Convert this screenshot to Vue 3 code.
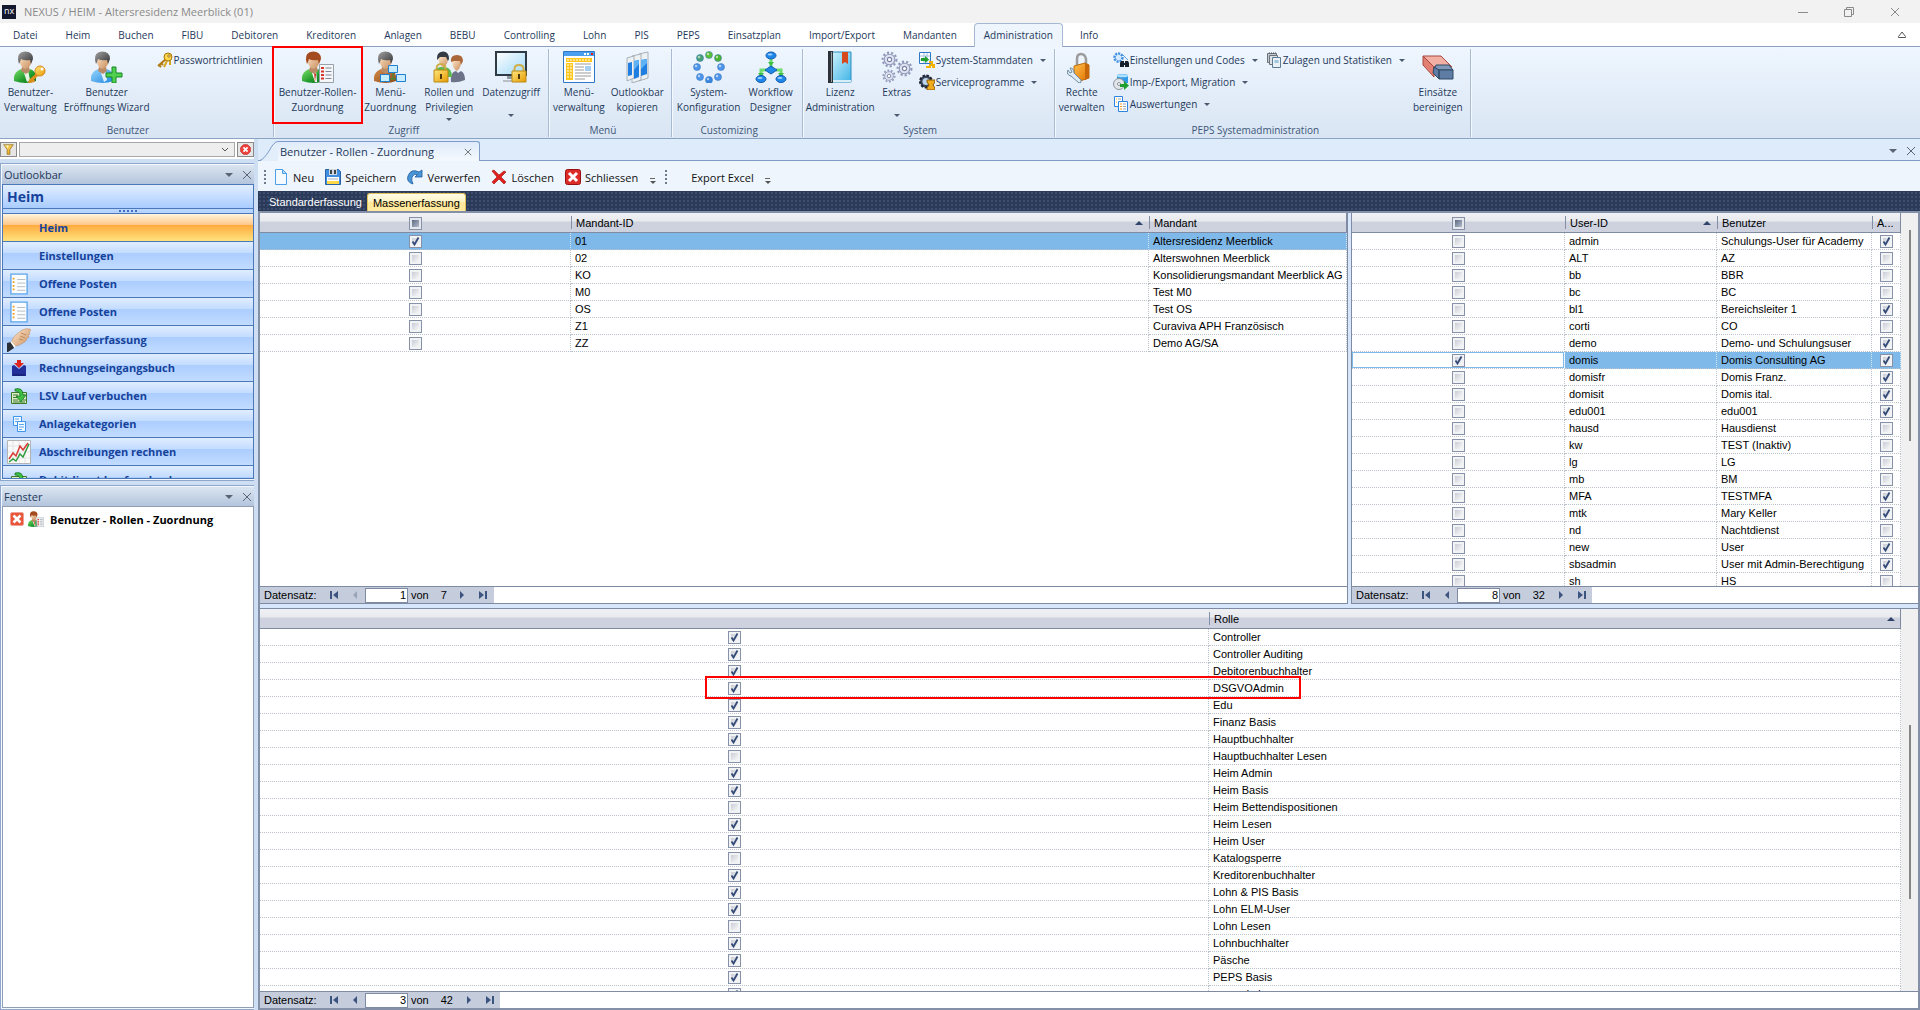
<script setup>
import { ref } from 'vue'

const menu = ['Datei', 'Heim', 'Buchen', 'FIBU', 'Debitoren', 'Kreditoren', 'Anlagen', 'BEBU', 'Controlling', 'Lohn', 'PIS', 'PEPS', 'Einsatzplan', 'Import/Export', 'Mandanten', 'Administration', 'Info']
const activeMenu = ref('Administration')

const groups = [
  { title: 'Benutzer', id: 'benutzer', items: [
    { icon: 'user-key', lines: ['Benutzer-', 'Verwaltung'] },
    { icon: 'user-add', lines: ['Benutzer', 'Eröffnungs Wizard'] },
    { small: [{ icon: 'keys', text: 'Passwortrichtlinien' }] },
  ] },
  { title: 'Zugriff', id: 'zugriff', items: [
    { icon: 'user-list', lines: ['Benutzer-Rollen-', 'Zuordnung'], marked: true },
    { icon: 'user-net', lines: ['Menü-', 'Zuordnung'] },
    { icon: 'users-lock', lines: ['Rollen und', 'Privilegien'], arrow: true },
    { icon: 'screen-lock', lines: ['Datenzugriff', ''], arrow: true },
  ] },
  { title: 'Menü', id: 'menu', items: [
    { icon: 'window', lines: ['Menü-', 'verwaltung'] },
    { icon: 'copy-bars', lines: ['Outlookbar', 'kopieren'] },
  ] },
  { title: 'Customizing', id: 'custom', items: [
    { icon: 'ring', lines: ['System-', 'Konfiguration'] },
    { icon: 'workflow', lines: ['Workflow', 'Designer'] },
  ] },
  { title: 'System', id: 'system', items: [
    { icon: 'book', lines: ['Lizenz', 'Administration'] },
    { icon: 'gears', lines: ['Extras', ''], arrow: true },
    { small: [{ icon: 'master', text: 'System-Stammdaten', arrow: true }, { icon: 'service', text: 'Serviceprogramme', arrow: true }] },
  ] },
  { title: 'PEPS Systemadministration', id: 'peps', items: [
    { icon: 'lock-tool', lines: ['Rechte', 'verwalten'] },
    { small: [{ icon: 'codes', text: 'Einstellungen und Codes', arrow: true }, { icon: 'disc', text: 'Imp-/Export, Migration', arrow: true }, { icon: 'reports', text: 'Auswertungen', arrow: true }] },
    { small: [{ icon: 'notes', text: 'Zulagen und Statistiken', arrow: true }] },
    { icon: 'eraser', lines: ['Einsätze', 'bereinigen'] },
  ] },
]

const outlook = [
  { text: 'Heim', active: true },
  { text: 'Einstellungen' },
  { text: 'Offene Posten', icon: 'list' },
  { text: 'Offene Posten', icon: 'list' },
  { text: 'Buchungserfassung', icon: 'hand' },
  { text: 'Rechnungseingangsbuch', icon: 'inbox' },
  { text: 'LSV Lauf verbuchen', icon: 'book-in' },
  { text: 'Anlagekategorien', icon: 'categories' },
  { text: 'Abschreibungen rechnen', icon: 'chart' },
  { text: 'Debitdirect Lauf verbuchen', icon: 'book-in' },
]

const tools = [
  { icon: 'new', text: 'Neu' },
  { icon: 'save', text: 'Speichern' },
  { icon: 'undo', text: 'Verwerfen' },
  { icon: 'delete', text: 'Löschen' },
  { icon: 'close', text: 'Schliessen' },
]

const u = (id, name, active, sel = false) => ({ sel, id, name, active })
const r = (role, sel = true) => ({ sel, role })

const panes = ref([
  {
    id: 'mandanten', pos: '1', total: '7', first: true, current: 0,
    cols: [
      { key: 'sel', check: true, head: true, w: 311 },
      { key: 'id', label: 'Mandant-ID', sort: true, w: 578 },
      { key: 'name', label: 'Mandant', w: 198 },
    ],
    rows: [
      { sel: true, id: '01', name: 'Altersresidenz Meerblick' },
      { sel: false, id: '02', name: 'Alterswohnen Meerblick' },
      { sel: false, id: 'KO', name: 'Konsolidierungsmandant Meerblick AG' },
      { sel: false, id: 'M0', name: 'Test M0' },
      { sel: false, id: 'OS', name: 'Test OS' },
      { sel: false, id: 'Z1', name: 'Curaviva APH Französisch' },
      { sel: false, id: 'ZZ', name: 'Demo AG/SA' },
    ],
  },
  {
    id: 'user', pos: '8', total: '32', current: 7, focus: true, scroll: [17, 211, 145],
    cols: [
      { key: 'sel', check: true, head: true, w: 213 },
      { key: 'id', label: 'User-ID', sort: true, w: 152 },
      { key: 'name', label: 'Benutzer', w: 155 },
      { key: 'active', label: 'A...', check: true, w: 29 },
    ],
    rows: [
      u('admin', 'Schulungs-User für Academy', true), u('ALT', 'AZ', false), u('bb', 'BBR', false), u('bc', 'BC', false),
      u('bl1', 'Bereichsleiter 1', true), u('corti', 'CO', false), u('demo', 'Demo- und Schulungsuser', true),
      u('domis', 'Domis Consulting AG', true, true), u('domisfr', 'Domis Franz.', true), u('domisit', 'Domis ital.', true),
      u('edu001', 'edu001', true), u('hausd', 'Hausdienst', false), u('kw', 'TEST (Inaktiv)', false), u('lg', 'LG', false),
      u('mb', 'BM', false), u('MFA', 'TESTMFA', true), u('mtk', 'Mary Keller', true), u('nd', 'Nachtdienst', false),
      u('new', 'User', true), u('sbsadmin', 'User mit Admin-Berechtigung', true), u('sh', 'HS', false),
    ],
  },
  {
    id: 'rollen', pos: '3', total: '42', marked: 3, scroll: [116, 174, 92],
    cols: [
      { key: 'sel', check: true, w: 949 },
      { key: 'role', label: 'Rolle', sort: true, w: 692 },
    ],
    rows: [
      r('Controller'), r('Controller Auditing'), r('Debitorenbuchhalter'), r('DSGVOAdmin'), r('Edu'), r('Finanz Basis'),
      r('Hauptbuchhalter'), r('Hauptbuchhalter Lesen', false), r('Heim Admin'), r('Heim Basis'), r('Heim Bettendispositionen', false),
      r('Heim Lesen'), r('Heim User'), r('Katalogsperre', false), r('Kreditorenbuchhalter'), r('Lohn & PIS Basis'),
      r('Lohn ELM-User'), r('Lohn Lesen', false), r('Lohnbuchhalter'), r('Päsche'), r('PEPS Basis'), r('pepsadmin'),
    ],
  },
])

const colWidth = (pane, col) => (col.w / pane.cols.reduce((s, c) => s + c.w, 0)) * 100 + '%'
const ring = [[16, 4, '#5cc03a'], [25, 7, '#4cb52f'], [28, 16, '#4f96ea'], [25, 26, '#4f96ea'], [16, 29, '#3b86e0'], [7, 26, '#4f96ea'], [4, 16, '#4f96ea'], [7, 7, '#4aa276']]
</script>

<template>
  <div class="app">
    <svg class="defs" aria-hidden="true">
      <defs>
        <linearGradient id="g-green" x1="0" y1="0" x2="1" y2="1"><stop offset="0" stop-color="#7be06a" /><stop offset=".6" stop-color="#1f9a2c" /><stop offset="1" stop-color="#0c6b1b" /></linearGradient>
        <linearGradient id="g-blue" x1="0" y1="0" x2="1" y2="1"><stop offset="0" stop-color="#9bd8ff" /><stop offset="1" stop-color="#1f86dd" /></linearGradient>
        <linearGradient id="g-brown" x1="0" y1="0" x2="1" y2="1"><stop offset="0" stop-color="#d98c4a" /><stop offset="1" stop-color="#8a4a1a" /></linearGradient>
        <linearGradient id="g-skin" x1="0" y1="0" x2="1" y2="1"><stop offset="0" stop-color="#ffe9cf" /><stop offset="1" stop-color="#c98d5c" /></linearGradient>
        <linearGradient id="g-hair" x1="0" y1="0" x2="1" y2="1"><stop offset="0" stop-color="#a2a2a2" /><stop offset="1" stop-color="#333" /></linearGradient>
        <linearGradient id="g-gold" x1="0" y1="0" x2="1" y2="1"><stop offset="0" stop-color="#ffe680" /><stop offset="1" stop-color="#e69a00" /></linearGradient>
        <linearGradient id="g-screen" x1="0" y1="0" x2="1" y2="1"><stop offset="0" stop-color="#fff" /><stop offset="1" stop-color="#9fd8f8" /></linearGradient>
        <linearGradient id="g-orange" x1="0" y1="0" x2="1" y2="1"><stop offset="0" stop-color="#ffc04a" /><stop offset="1" stop-color="#e07000" /></linearGradient>
        <linearGradient id="g-cyan" x1="0" y1="0" x2="1" y2="1"><stop offset="0" stop-color="#d8f6ff" /><stop offset="1" stop-color="#3fb4e6" /></linearGradient>
      </defs>
      <symbol id="i-head" viewBox="0 0 32 32">
        <path d="M8 16h7l1 4-4 3-5-3z" fill="#b98a66" />
        <path d="M5 6q0-5 6-5 7 0 7 6 0 6-3 9-3 3-6 1-4-4-4-11z" fill="url(#g-skin)" />
      </symbol>
      <symbol id="i-user-key" viewBox="0 0 32 32">
        <path d="M0 30q-1-9 7-12l5 4 4-4q6 2 6 8v4q-10 4-22 0z" fill="url(#g-green)" /><path d="M9 19l3 3 2-3 2 10-3 2z" fill="#e6f4e2" />
        <use href="#i-head" /><path d="M4 9q-1-8 7-8.500 8 0 8 7.500l-2 5-1-4q-6 1-9-1l-1 3-1 2z" fill="url(#g-hair)" />
        <path d="M24 23l-8 7M18 28l2 3M15 30l2 2" stroke="#e0901a" stroke-width="3" /><circle cx="26" cy="20" r="5" fill="url(#g-gold)" stroke="#d9861a" /><circle cx="28" cy="18" r="1.500" fill="#fff" />
      </symbol>
      <symbol id="i-user-add" viewBox="0 0 32 32">
        <path d="M0 30q-1-9 7-12l5 4 4-4q6 2 6 8v4q-10 4-22 0z" fill="url(#g-blue)" /><path d="M9 19l3 3 2-3 2 10-3 2z" fill="#e2effa" />
        <use href="#i-head" /><path d="M4 9q-1-8 7-8.500 8 0 8 7.500l-2 5-1-4q-6 1-9-1l-1 3-1 2z" fill="url(#g-hair)" />
        <path d="M21 16h4v6h6v4h-6v6h-4v-6h-6v-4h6z" fill="#52cf4e" stroke="#128a24" />
      </symbol>
      <symbol id="i-user-list" viewBox="0 0 32 32">
        <path d="M0 30q-1-9 7-12l5 4 4-4q6 2 6 8v4q-10 4-22 0z" fill="url(#g-green)" /><path d="M9 19l3 3 2-3 1 12h-2z" fill="#fff" /><path d="M12 21l2 2-1 8z" fill="#c8201c" />
        <use href="#i-head" /><path d="M4 9q-1-8 7-8.500 8 0 8 7.500l-2 5-1-4q-6 1-9-1l-1 3-1 2z" fill="#a34a1e" />
        <path d="M17.500 13.500h14v18h-14z" fill="#f4f6f8" stroke="#98a2ac" /><path d="M19 17h3M19 20.500h3M19 24h3M19 27.500h3" stroke="#d8342c" stroke-width="2" /><path d="M23.500 17h6M23.500 20.500h6M23.500 24h6M23.500 27.500h6" stroke="#7e8a98" />
      </symbol>
      <symbol id="i-user-net" viewBox="0 0 32 32">
        <path d="M0 30q-1-9 7-12l5 4 4-4q6 2 6 8v4q-10 4-22 0z" fill="url(#g-brown)" />
        <use href="#i-head" /><path d="M4 9q-1-8 7-8.500 8 0 8 7.500l-2 5-1-4q-6 1-9-1l-1 3-1 2z" fill="url(#g-hair)" />
        <path d="M19 20v8M8 28h20" stroke="#2f9a3a" /><g fill="#c7ecff" stroke="#1f7fd0"><path d="M14.500 14.500h9v7h-9zM6.500 23.500h9v7h-9zM22.500 23.500h9v7h-9z" /></g>
      </symbol>
      <symbol id="i-users-lock" viewBox="0 0 32 32">
        <path d="M18 31q-1-10 5-11l2 2 3-2q4 2 4 9-7 3-14 2z" fill="#6d7388" /><path d="M19 8h9q1 8-4 12-5-2-5-12z" fill="url(#g-skin)" /><path d="M18 11q-1-7 6-7 6 0 6 6l-2 4-1-4h-6z" fill="#a9673a" />
        <path d="M1 26q0-9 6-10h5q7 1 7 10z" fill="#5bb94d" /><path d="M5 4h10q1 9-5 13-5-4-5-13z" fill="url(#g-skin)" /><path d="M4 9q-1-8 6-8.500 6 0 6 7.500l-1 2-2-4H7z" fill="#333a44" />
        <path d="M3.500 19v-1q0-5 4.500-5t4.500 5v1" fill="none" stroke="#cfae48" stroke-width="2" /><path d="M1 19h14v12H1z" fill="url(#g-gold)" stroke="#b98a14" /><path d="M7 23h2v5H7z" fill="#4d3a08" />
      </symbol>
      <symbol id="i-screen-lock" viewBox="0 0 32 32">
        <path d="M1 1h30v23H1z" fill="url(#g-screen)" stroke="#2e3a44" stroke-width="2" /><path d="M12 25h8v3h-8z" fill="#8e979f" /><path d="M8 29h14v2H8z" fill="#b7bec4" />
        <path d="M19.500 20v-2q0-4 4.500-4t4.500 4v2" fill="none" stroke="#cfae48" stroke-width="2" /><path d="M17 20h14v11H17z" fill="url(#g-gold)" stroke="#b98a14" /><path d="M23 23h2v5h-2z" fill="#4d3a08" />
      </symbol>
      <symbol id="i-window" viewBox="0 0 32 32">
        <path d="M.5.500h31v31H.500z" fill="#fff" stroke="#2f78c8" /><path d="M1 1h30v4H1z" fill="#4aa0ee" /><path d="M21 2h2v2h-2zM24 2h2v2h-2z" fill="#fff" /><path d="M28 2h2v2h-2z" fill="#e81c1c" />
        <path d="M3 7h26v4H3z" fill="#ffc61c" /><path d="M3 12h7v17H3z" fill="#ffc61c" /><path d="M4 9h24M4 14h5M4 17h5M4 20h5M4 23h5M4 26h5" stroke="#fff" stroke-dasharray="2 1" />
        <path d="M12 13h16M12 16h9M12 19h9M12 22h16M12 25h16M12 28h10" stroke="#9a9a9a" /><path d="M22 15h6v5h-6z" fill="#a8cdf2" />
      </symbol>
      <symbol id="i-copy-bars" viewBox="0 0 32 32">
        <g stroke="#a8b0b8" fill="#eef1f4"><path d="M18 3l9-2v26l-9 3z" /><path d="M11 5l9-2v26l-9 3z" /><path d="M6 7l7-2v22l-7 3z" /></g>
        <path d="M20 9l6-1v15l-6 2zM13 10l5-1v17l-5 2zM7 12l4-1v13l-4 1z" fill="#1f7fe0" /><path d="M20 9l6-1v4l-6 6zM13 10l5-1v4l-5 6z" fill="#5fb2f6" />
      </symbol>
      <symbol id="i-ring" viewBox="0 0 32 32">
        <g v-for="(p, i) in ring" :key="i"><circle :cx="p[0]" :cy="p[1]" r="3.500" :fill="p[2]" stroke="#2f6fb8" stroke-width=".500" /><circle :cx="p[0] - 1" :cy="p[1] - 1" r="1.200" fill="#fff" opacity=".6" /></g>
      </symbol>
      <symbol id="i-workflow" viewBox="0 0 32 32">
        <path d="M16 8v8M11 19H6v6M21 19h5v6" fill="none" stroke="#6cdc6c" stroke-width="3" /><path d="M13 11l3 4 3-4zM3 22l3 4 3-4zM23 22l3 4 3-4z" fill="#3fbf4a" />
        <g fill="#1f86ea" stroke="#0f5cb0"><ellipse cx="16" cy="4.500" rx="5" ry="3.500" /><path d="M16 15l6 4-6 4-6-4z" /><ellipse cx="6" cy="28" rx="5" ry="3.500" /><ellipse cx="26" cy="28" rx="5" ry="3.500" /></g><g fill="#9fd2ff"><ellipse cx="15" cy="3.500" rx="2.500" ry="1" /><ellipse cx="5" cy="27" rx="2.500" ry="1" /><ellipse cx="25" cy="27" rx="2.500" ry="1" /></g>
      </symbol>
      <symbol id="i-book" viewBox="0 0 32 32">
        <path d="M5 1h22v30H5z" fill="url(#g-cyan)" stroke="#2b8fc0" /><path d="M4 0h5v32H4z" fill="#2c3238" /><path d="M7 1h1v30H7z" fill="#9aa4ac" /><path d="M9 29h18v2H9z" fill="#d6eef8" /><path d="M18 1h6v12l-3-2-3 2z" fill="#d5491c" />
      </symbol>
      <symbol id="i-gear" viewBox="0 0 16 16">
        <circle cx="8" cy="8" r="6.500" fill="none" stroke="#8f98b8" stroke-width="2" stroke-dasharray="2 2" /><circle cx="8" cy="8" r="5" fill="#dfe3f0" stroke="#8f98b8" /><circle cx="8" cy="8" r="2" fill="#fff" stroke="#7a84a8" />
      </symbol>
      <symbol id="i-gears" viewBox="0 0 32 32">
        <use href="#i-gear" x="0" y="0" width="17" height="17" /><use href="#i-gear" x="15" y="9" width="17" height="17" /><use href="#i-gear" x="1" y="18" width="14" height="14" />
      </symbol>
      <symbol id="i-lock-tool" viewBox="0 0 32 32">
        <path d="M11 14V8q0-5 4-5t5 5v5" fill="none" stroke="#9c9c9c" stroke-width="2.500" /><path d="M8 15l11-3 4 2v13l-9 3-6-4z" fill="url(#g-orange)" stroke="#b86a10" /><path d="M19 12l4 2v13l-4 2z" fill="#c8660a" />
        <path d="M2 19q-2 5 3 6l8 7q3 0 2-3l-7-7q0-5-4-5l2 4-2 1z" fill="#dfeaf2" stroke="#6f8ca4" />
      </symbol>
      <symbol id="i-eraser" viewBox="0 0 32 32">
        <path d="M1 5h18l11 11H12z" fill="#f2b0a4" stroke="#a8483c" /><path d="M1 5l11 11v10L1 14z" fill="#e07f72" stroke="#a8483c" /><path d="M14 14h13l4 5H17l-5 0z" fill="#8098b8" stroke="#2f4864" /><path d="M12 16l5 3v9l-6-6zM17 19h14v9H17z" fill="#5f7ca4" stroke="#2f4864" />
      </symbol>
      <symbol id="i-keys" viewBox="0 0 16 16">
        <path d="M9 7L1 14M2 13l2 2M4 11l2 2" stroke="#b07a10" stroke-width="2" fill="none" /><circle cx="11" cy="5" r="4" fill="#ffd84a" stroke="#a87408" /><circle cx="12" cy="4" r="1.200" fill="#fff" stroke="#a87408" /><path d="M10 9l-3 6M13 9v4" stroke="#d8a41c" stroke-width="2" />
      </symbol>
      <symbol id="i-master" viewBox="0 0 16 16">
        <path d="M.5.500h11v11H.500z" fill="#fff" stroke="#2f78c8" /><path d="M1 4h10M1 8h10M5 1v10M8 1v10" stroke="#9fbfe0" /><path d="M2 6h4V4l4 3.500L6 11V9H2z" fill="#1fa02c" /><path d="M10 10h3v3h3v2h-3M7 15h4v-3" fill="none" stroke="#f2b200" stroke-width="2" />
      </symbol>
      <symbol id="i-service" viewBox="0 0 16 16">
        <circle cx="7" cy="7.500" r="6" fill="#3c4658" stroke="#1c2434" stroke-width="2" stroke-dasharray="2.500 1.500" /><circle cx="7" cy="7.500" r="3.500" fill="#bcd4f0" /><path d="M8 6h8v2l-2 3 2 3v2H8v-2l2-3-2-3z" fill="#f0ac1c" stroke="#8a5a08" />
      </symbol>
      <symbol id="i-codes" viewBox="0 0 16 16">
        <circle cx="5.500" cy="5.500" r="4" fill="#d6eaff" stroke="#3f8ee0" stroke-width="2.500" stroke-dasharray="2 1" /><path d="M9 2l6 6" stroke="#5aa0e6" /><path d="M8 9h3v6H7v-4zM12 9h3l1 2v4h-4z" fill="#15202c" /><path d="M11 11h1v2h-1z" fill="#15202c" />
      </symbol>
      <symbol id="i-disc" viewBox="0 0 16 16">
        <path d="M4 1q6-2 11 0v8H4z" fill="#2f9ae8" /><ellipse cx="9.500" cy="1.800" rx="5.500" ry="1.500" fill="#aee0ff" /><circle cx="6" cy="10" r="5.500" fill="#e2e6ea" stroke="#8c949c" /><circle cx="6" cy="10" r="1.500" fill="#fff" stroke="#8c949c" /><path d="M7 10h4V7l5 4.500-5 4.500v-3H7z" fill="#1fa02c" />
      </symbol>
      <symbol id="i-reports" viewBox="0 0 16 16">
        <path d="M1.500.500h8v10h-8z" fill="#fff" stroke="#2f84e0" /><path d="M5.500 5.500h9v10h-9z" fill="#fff" stroke="#2f84e0" /><path d="M7 8h2M7 10.500h2M7 13h2M3 3h1M3 6h1" stroke="#f29a1c" /><path d="M10 8h3M10 10.500h3M10 13h3M5 3h3" stroke="#98a4b0" />
      </symbol>
      <symbol id="i-notes" viewBox="0 0 16 16">
        <path d="M1.500 1.500h9v9h-9z" fill="#c2c8ce" stroke="#6a727a" /><path d="M3.500 3.500h8v9h-8z" fill="#dde2e6" stroke="#6a727a" /><path d="M6.500 5.500h8v10h-8z" fill="#eaf2f8" stroke="#5f7c94" /><path d="M8.500 8h4v3h-4z" fill="#9fc6de" /><path d="M3 1h7" stroke="#555" stroke-dasharray="1 1" />
      </symbol>
      <symbol id="i-list" viewBox="0 0 20 24">
        <path d="M1 1h18v22H1z" fill="#fbfdff" stroke="#5fa6ea" stroke-width="1.500" /><path d="M3 6h2M3 10h2M3 14h2M3 18h2" stroke="#f2a01c" stroke-width="2" /><path d="M8 7h9M8 11h9M8 15h9M8 19h9" stroke="#b0b8c0" />
      </symbol>
      <symbol id="i-hand" viewBox="0 0 24 24">
        <path d="M4 15q2-7 6-9l5-4q4-2 8-1 2 2-1 3l1 2-2 1 1 2-2 1q0 3-4 5-4 3-8 3l-2 2z" fill="url(#g-skin)" stroke="#c08858" stroke-width=".500" /><path d="M14 5l5 2M13 8l5 2M12 11l4 1" stroke="#b57a4c" stroke-width=".800" /><path d="M0 15l4-1 3 6-6 4H0z" fill="#2b3038" /><path d="M4 14l4 5" stroke="#fff" stroke-width="1.500" />
      </symbol>
      <symbol id="i-inbox" viewBox="0 0 16 16">
        <path d="M1 6l2-1 5 4 5-4 2 1v10H1z" fill="#24309a" /><path d="M2 15h12" stroke="#0f1660" /><path d="M6 0h4v3h3L8 8 3 3h3z" fill="#e0241c" />
      </symbol>
      <symbol id="i-book-in" viewBox="0 0 16 16">
        <path d="M.5 4.500h15v11H.500z" fill="#dcebc8" stroke="#3c7a2c" /><path d="M2 7h5M2 9.500h5M2 12h5M2 14h12M11 7h3M12 12h3" stroke="#3c7a2c" /><path d="M4 1q8-2 8 6h3l-5 7-5-6h4q0-5-5-5z" fill="#3fc044" stroke="#0f6a18" stroke-width=".700" />
      </symbol>
      <symbol id="i-categories" viewBox="0 0 16 16">
        <g fill="#f2f9ff" stroke="#3f94ec"><path d="M2.500.500h8v9h-8z" /><path d="M6.500 5.500h8v10h-8z" /></g><path d="M4 3h4M4 5.500h2M8 8.500h5M8 11h5M8 13.500h3" stroke="#5aa6f0" />
      </symbol>
      <symbol id="i-chart" viewBox="0 0 24 24">
        <path d="M.5.500h23v23H.500z" fill="#fafafa" stroke="#b4b4b4" /><path d="M6 1v22M12 1v22M18 1v22M1 6h22M1 12h22M1 18h22" stroke="#e4e4e4" /><path d="M2 19l4-6 3 3 4-10 3 4 5-7" fill="none" stroke="#d83a34" stroke-width="1.500" /><path d="M2 22l4-3 3 2 4-7 3 3 6-13" fill="none" stroke="#2f9a3c" stroke-width="1.500" />
      </symbol>
      <symbol id="i-new" viewBox="0 0 16 16"><path d="M2.500.500h7l4 4v11h-11z" fill="#f4faff" stroke="#4f9fe6" /><path d="M9.500.500v4h4z" fill="#b8dcfa" stroke="#4f9fe6" /></symbol>
      <symbol id="i-save" viewBox="0 0 16 16"><path d="M.5.500h13l2 2v13H.500z" fill="#3f8fe0" stroke="#2a62a8" /><path d="M4 0h8v6H4z" fill="#d2d8de" /><path d="M5 1h2v4H5zM9 1h2v4H9z" fill="#3c444c" /><path d="M2 8h12v7H2z" fill="#fff" /><path d="M2 12h12v3H2z" fill="#ffd84a" /><path d="M3 10h10" stroke="#a8b0b8" /></symbol>
      <symbol id="i-undo" viewBox="0 0 16 16"><path d="M15 1v7H8l2.500-2.500Q7 4 5 8q-1 3 1 7Q-1 13 1 7 4-1 12 3z" fill="#4a94d8" stroke="#1c5c9c" stroke-width=".800" /></symbol>
      <symbol id="i-delete" viewBox="0 0 16 16"><path d="M1 2l2-1 5 5 5-4 2 1-5 5 5 5-2 2-5-5-5 5-2-2 5-5z" fill="#e0201c" stroke="#a00c0c" stroke-width=".600" /></symbol>
      <symbol id="i-close" viewBox="0 0 16 16"><rect x=".5" y=".5" width="15" height="15" rx="2" fill="#dc2c28" stroke="#981010" /><path d="M4 4l8 8M12 4l-8 8" stroke="#fff" stroke-width="3" /></symbol>
      <symbol id="i-close-light" viewBox="0 0 16 16"><rect x=".5" y=".5" width="15" height="15" rx="2" fill="#e8553c" stroke="#f0a090" /><path d="M4 4l8 8M12 4l-8 8" stroke="#fff" stroke-width="3" /></symbol>
      <symbol id="i-funnel" viewBox="0 0 16 16"><path d="M1 1h14L10 8v7H6V8z" fill="url(#g-gold)" stroke="#8a6a20" /><path d="M5 2h3l-1 5z" fill="#fff6c8" /></symbol>
      <symbol id="i-clear" viewBox="0 0 16 16"><path d="M5 1h6l4 4v6l-4 4H5l-4-4V5z" fill="#f0403c" stroke="#c01c1c" /><path d="M5 5l6 6M11 5l-6 6" stroke="#fff" stroke-width="2.500" /></symbol>
      <symbol id="i-x" viewBox="0 0 10 10"><path d="M1 1l8 8M9 1l-8 8" stroke="currentColor" fill="none" /></symbol>
      <symbol id="i-down" viewBox="0 0 8 4"><path d="M0 0h8L4 4z" fill="currentColor" /></symbol>
    </svg>

    <header class="titlebar">
      <span class="logo">nx</span>
      <h1>NEXUS / HEIM - Altersresidenz Meerblick (01)</h1>
      <button class="win" aria-label="Minimieren"><svg viewBox="0 0 10 10"><path d="M0 5.500h10" stroke="currentColor" /></svg></button>
      <button class="win" aria-label="Verkleinern"><svg viewBox="0 0 10 10"><path d="M.5 2.500h7v7h-7zM2.500 2.500v-2h7v7h-2" fill="none" stroke="currentColor" /></svg></button>
      <button class="win" aria-label="Schliessen"><svg><use href="#i-x" /></svg></button>
    </header>

    <nav class="menubar">
      <button v-for="m in menu" :key="m" class="menu-tab" :class="{ active: m === activeMenu }" @click="activeMenu = m">{{ m }}</button>
      <button class="collapse" aria-label="Menüband minimieren"><svg viewBox="0 0 8 8"><path d="M.5 5.500L4 1l3.500 4.500v1h-7z" fill="none" stroke="currentColor" /></svg></button>
    </nav>

    <section class="ribbon">
      <div v-for="g in groups" :key="g.id" class="group" :class="g.id">
        <div class="items">
          <template v-for="(it, i) in g.items" :key="i">
            <div v-if="it.small" class="stack">
              <button v-for="s in it.small" :key="s.text" class="small">
                <svg class="ic16"><use :href="'#i-' + s.icon" /></svg><span>{{ s.text }}</span>
                <svg v-if="s.arrow" class="caret"><use href="#i-down" /></svg>
              </button>
            </div>
            <button v-else class="big">
              <svg class="ic32"><use :href="'#i-' + it.icon" /></svg>
              <span>{{ it.lines[0] }}</span>
              <span v-if="it.lines[1]">{{ it.lines[1] }}</span>
              <svg v-if="it.arrow" class="caret" :class="{ low: !it.lines[1] }"><use href="#i-down" /></svg>
              <i v-if="it.marked" class="mark"></i>
            </button>
          </template>
        </div>
        <div class="caption">{{ g.title }}</div>
      </div>
    </section>

    <div class="work">
      <aside class="side">
        <div class="filter">
          <button class="fbtn" aria-label="Filter"><svg><use href="#i-funnel" /></svg></button>
          <span class="combo"><select aria-label="Suche"><option></option></select><svg viewBox="0 0 8 5"><path d="M1 1l3 3 3-3" fill="none" stroke="currentColor" /></svg></span>
          <button class="fbtn" aria-label="Filter löschen"><svg><use href="#i-clear" /></svg></button>
        </div>
        <div class="docks">
          <section class="dock">
            <h2><span>Outlookbar</span><button aria-label="Menü"><svg class="tri"><use href="#i-down" /></svg></button><button aria-label="Schliessen"><svg class="cross"><use href="#i-x" /></svg></button></h2>
            <div class="bar">
              <h3>Heim</h3>
              <div class="splitter"></div>
              <ul>
                <li v-for="(o, i) in outlook" :key="i"><a href="#" :class="{ active: o.active }"><svg v-if="o.icon" :class="o.icon"><use :href="'#i-' + o.icon" /></svg><span>{{ o.text }}</span></a></li>
              </ul>
            </div>
          </section>
          <section class="dock">
            <h2><span>Fenster</span><button aria-label="Menü"><svg class="tri"><use href="#i-down" /></svg></button><button aria-label="Schliessen"><svg class="cross"><use href="#i-x" /></svg></button></h2>
            <div class="windows">
              <a href="#"><svg class="x14"><use href="#i-close-light" /></svg><svg class="ic16"><use href="#i-user-list" /></svg><span>Benutzer - Rollen - Zuordnung</span></a>
            </div>
          </section>
        </div>
      </aside>

      <main class="main">
        <div class="tabs">
          <div class="tab">
            <svg class="slant" viewBox="0 0 18 20"><path d="M0 20Q6 18 9 12 14 1 18 1V20z" fill="#e3eefb" /><path d="M0 19.500Q4 18 9 10 14 .500 18 .500" fill="none" stroke="#7f9dc6" /></svg>
            <div class="tab-in"><span>Benutzer - Rollen - Zuordnung</span><button aria-label="Tab schliessen"><svg><use href="#i-x" /></svg></button></div>
          </div>
          <div class="tab-tools"><button aria-label="Fensterliste"><svg class="tri"><use href="#i-down" /></svg></button><button aria-label="Schliessen"><svg class="cross"><use href="#i-x" /></svg></button></div>
        </div>

        <div class="toolbar">
          <i class="grip"></i>
          <button v-for="t in tools" :key="t.text"><svg class="ic16"><use :href="'#i-' + t.icon" /></svg>{{ t.text }}</button>
          <i class="more"></i>
          <i class="grip"></i>
          <button class="export">Export Excel</button>
          <i class="more"></i>
        </div>

        <div class="views">
          <button>Standarderfassung</button>
          <button class="active">Massenerfassung</button>
        </div>

        <div class="panes">
          <section v-for="p in panes" :key="p.id" class="pane" :class="p.id">
            <div class="body">
              <div class="grid">
                <table>
                  <colgroup><col v-for="c in p.cols" :key="c.key" :style="{ width: colWidth(p, c) }" /></colgroup>
                  <thead>
                    <tr>
                      <th v-for="c in p.cols" :key="c.key" scope="col">
                        <input v-if="c.head" type="checkbox" class="partial" aria-label="Alle auswählen" />
                        <div v-else class="th"><span>{{ c.label }}</span><svg v-if="c.sort" viewBox="0 0 8 4"><path d="M0 4h8L4 0z" fill="#2f4468" /></svg></div>
                      </th>
                    </tr>
                  </thead>
                  <tbody>
                    <tr v-for="(row, i) in p.rows" :key="i" :class="{ current: i === p.current, focus: p.focus }">
                      <td v-for="(c, j) in p.cols" :key="c.key">
                        <input v-if="c.check" v-model="row[c.key]" type="checkbox" :aria-label="row.name || row.role" />
                        <template v-else>{{ row[c.key] }}</template>
                        <i v-if="i === p.marked && j === 0" class="row-mark"></i>
                      </td>
                    </tr>
                  </tbody>
                </table>
              </div>
              <div v-if="p.scroll" class="scroll" :style="{ gridTemplateRows: p.scroll.map(n => n + 'fr').join(' ') }"><i></i></div>
            </div>
            <div class="record">
              <div class="record-in">
                <label :for="'pos-' + p.id">Datensatz:</label>
                <button aria-label="Erster"><svg viewBox="0 0 8 8"><path d="M0 0h2v8H0zM8 0v8L3 4z" fill="currentColor" /></svg></button>
                <button aria-label="Vorheriger" :disabled="p.first"><svg viewBox="0 0 8 8"><path d="M6 0v8L2 4z" fill="currentColor" /></svg></button>
                <input :id="'pos-' + p.id" v-model="p.pos" type="text" />
                <span>von</span><span class="total">{{ p.total }}</span>
                <button aria-label="Nächster"><svg viewBox="0 0 8 8"><path d="M2 0v8l4-4z" fill="currentColor" /></svg></button>
                <button aria-label="Letzter"><svg viewBox="0 0 8 8"><path d="M6 0h2v8H6zM0 0v8l5-4z" fill="currentColor" /></svg></button>
              </div>
            </div>
          </section>
        </div>
      </main>
    </div>
  </div>
</template>

<style>
body { margin: 0; }
</style>

<style scoped>
* { box-sizing: border-box; }
.app { display: flex; flex-direction: column; height: 100vh; overflow: hidden; background: #cfdff3; font: 10px/15px "Open Sans", "Noto Sans", sans-serif; color: #1e395b; }
.defs { position: absolute; width: 0; height: 0; }
button { font: inherit; color: inherit; background: none; border: 0; padding: 0; margin: 0; }
a { color: inherit; text-decoration: none; }
h1, h2, h3, ul { margin: 0; padding: 0; font: inherit; list-style: none; }
svg { display: block; flex: none; }
.ic16 { width: 16px; height: 16px; }
.ic32 { width: 32px; height: 32px; }
.tri { width: 8px; height: 4px; }
.cross { width: 10px; height: 10px; }

.titlebar { display: flex; align-items: center; height: 23px; flex: none; background: #f2f2f2; padding: 0 10px 0 2px; color: #8a8a8a; }
.logo { width: 14px; height: 14px; background: #14182e; color: #fff; font-size: 9px; line-height: 12px; text-align: center; }
.titlebar h1 { flex: 1; font-size: 11px; margin-left: 8px; }
.win { width: 46px; height: 23px; display: grid; place-items: center; }
.win:last-child { width: 30px; margin-left: 8px; }
.win svg { width: 10px; height: 10px; }

.menubar { display: flex; height: 24px; flex: none; background: #fff; border-bottom: 1px solid #8ba0bc; }
.menu-tab { padding: 0 14px; border: 1px solid transparent; border-width: 1px 0 0; white-space: nowrap; }
.menu-tab:first-child { padding-left: 13px; }
.menu-tab.active { position: relative; height: 24px; padding: 0 9px; margin: 0 3px; border: 1px solid #a5b9d5; border-bottom: 0; border-radius: 4px 4px 0 0; background: #eef5fd; }
.collapse { margin-left: auto; width: 36px; display: grid; place-items: center; color: #555; }
.collapse svg { width: 8px; height: 8px; }

.ribbon { display: flex; height: 92px; flex: none; background: linear-gradient(#eff6fe, #e3edf9 50%, #d9e5f3); border-bottom: 1px solid #8ba4c4; }
.group { display: flex; flex-direction: column; margin: 2px 0 1px; padding: 0 8px 0 5px; border-right: 1px solid #a9bbd3; box-shadow: 1px 0 #f4f9ff; }
.group.benutzer { padding: 0 10px 0 4px; }
.group.menu { padding: 0 7px 0 4px; }
.group.custom { padding-right: 9px; }
.group.system { padding: 0 8px 0 3px; }
.group.peps { padding: 0 7px 0 4px; }
.items { display: flex; flex: 1; gap: 8px; }
.benutzer .items { gap: 7px; }
.menu .items, .system .items { gap: 6px; }
.big { position: relative; display: flex; flex-direction: column; align-items: center; padding-top: 2px; white-space: nowrap; }
.big .ic32 { margin-bottom: 2px; }
.caret { width: 6px; height: 3px; color: #4c5a70; }
.big .caret { margin-top: 3px; }
.big .caret.low { margin-top: 14px; }
.mark { position: absolute; inset: -3px -7px -1px; border: 2px solid #f00; z-index: 1; }
.stack { display: flex; flex-direction: column; align-items: flex-start; }
.small { display: flex; align-items: center; gap: 1px; height: 22px; white-space: nowrap; }
.small .caret { margin-left: 6px; }
.caption { text-align: center; height: 14px; padding-right: 11px; color: #3e5679; }

.work { display: flex; flex: 1; min-height: 0; }
.side { display: flex; flex-direction: column; width: 254px; flex: none; }
.filter { display: flex; gap: 2px; height: 20px; padding: 3px 0 2px; background: #fff; }
.fbtn { display: grid; place-items: center; width: 17px; height: 15px; border: 1px solid #8a8a8a; background: #e6e6e6; }
.fbtn svg { width: 11px; height: 11px; }
.combo { position: relative; flex: 1; }
.combo select { appearance: none; display: block; width: 100%; height: 15px; border: 1px solid #a8a8a8; border-radius: 0; background: #eee; }
.combo svg { position: absolute; right: 6px; top: 5px; width: 8px; height: 5px; color: #555; }
.docks { flex: 1; min-height: 0; display: grid; grid-template-rows: 318fr 525fr; gap: 4px; padding-top: 4px; }
.dock { display: flex; flex-direction: column; min-height: 0; overflow: hidden; border: 1px solid #8ea7cc; border-right: 0; padding: 1px 0 1px 1px; background: #f4f8fd; }
.dock h2 { display: flex; align-items: center; gap: 9px; height: 19px; flex: none; padding: 0 2px; background: linear-gradient(#dbe5f1, #b3c4dc); font-size: 11px; }
.dock h2 span { flex: 1; }
.dock h2 button, .tab-tools button { color: #5a6472; }
.bar { flex: 1; min-height: 0; overflow: hidden; border: 1px solid #4b78b8; color: #15429b; font-weight: 700; font-size: 11px; }
.bar h3 { height: 24px; padding-left: 4px; font-size: 14px; line-height: 23px; border-bottom: 1px solid #4b78b8; background: linear-gradient(#e2eeff, #a9ccff); }
.splitter { height: 5px; border-bottom: 1px solid #4b78b8; background: radial-gradient(circle at 2px 2px, #3f6fc0 1px, transparent 1px) center / 4px 4px content-box repeat-x, #b8d5ff; padding: 0 116px; }
.bar a { display: flex; align-items: center; position: relative; height: 28px; padding-left: 36px; border-bottom: 1px solid #4b78b8; background: linear-gradient(#e0edff, #c4dcff 40%, #accdff 42%, #c2dcff); }
.bar a.active { background: linear-gradient(#fff4dc, #ffc88a 40%, #ffab3f 42%, #ffe27e); }
.bar a svg { position: absolute; left: 7px; width: 18px; height: 24px; }
.bar a svg.hand, .bar a svg.chart { left: 4px; width: 24px; height: 24px; }
.bar a svg.inbox, .bar a svg.book-in, .bar a svg.categories { left: 8px; width: 16px; height: 16px; }
.windows { flex: 1; border: 1px solid #8f9db5; background: #fff; padding-top: 3px; }
.windows a { display: flex; align-items: center; gap: 4px; height: 18px; padding-left: 7px; color: #000; font-weight: 700; font-size: 11px; }
.windows span { margin-left: 2px; }
.x14 { width: 14px; height: 14px; }

.main { display: flex; flex-direction: column; flex: 1; min-width: 0; margin-left: 4px; }
.tabs { display: flex; align-items: flex-end; height: 22px; flex: none; background: #deebfb; box-shadow: inset 0 -1px #7f9dc6; padding-left: 2px; }
.tab { display: flex; height: 20px; font-size: 11px; }
.slant { width: 18px; height: 20px; }
.tab-in { display: flex; align-items: center; gap: 30px; padding: 0 7px 0 2px; background: linear-gradient(#dfebfa, #f4f9fe); border: 1px solid #7f9dc6; border-width: 1px 1px 0 0; border-radius: 0 3px 0 0; }
.tab-in svg { width: 8px; height: 8px; color: #555; }
.tab-tools { display: flex; align-items: center; gap: 9px; height: 20px; margin-left: auto; padding-right: 4px; }
.toolbar { display: flex; align-items: center; height: 30px; flex: none; padding: 2px 0 0 6px; background: #eef5fd; color: #111; font-size: 11px; }
.toolbar button { display: flex; align-items: center; gap: 4px; margin-right: 11px; height: 20px; }
.grip { width: 2px; height: 14px; background: repeating-linear-gradient(#6e7a8c 0 2px, transparent 2px 4px); margin-right: 7px; }
.more { position: relative; width: 7px; height: 10px; margin: 8px 9px 0 0; background: linear-gradient(#666, #666) center 2px / 5px 1px no-repeat; }
.more::after { content: ""; position: absolute; left: 1px; top: 5px; border: 3px solid transparent; border-width: 3px 3px 0; border-top-color: #555; }
.toolbar .export { margin: 0 10px 0 17px; }

.views { display: flex; align-items: flex-end; height: 20px; flex: none; padding-left: 6px; font: 11px/18px "Liberation Sans", Arial, sans-serif; color: #fff; background: radial-gradient(circle, #3d4d6e 1px, transparent 1px) 0 0 / 4px 4px, #2b3a58; }
.views button { height: 19px; padding: 0 5px; border-radius: 3px 3px 0 0; }
.views .active { height: 18px; color: #000; border: 1px solid #e2c35a; border-bottom: 0; background: linear-gradient(#fffbe8, #fff3c0 45%, #ffe89a 50%, #ffe9a0); }

.panes { flex: 1; min-height: 0; display: grid; grid-template: 391fr 400fr / 1088fr 567fr; gap: 4px 3px; border: 2px solid #8490a8; background: #d7e6fb; font: 11px/16px "Liberation Sans", Arial, sans-serif; color: #000; }
.pane { display: flex; flex-direction: column; min-width: 0; min-height: 0; background: #fff; border: 0 solid #7f8ba3; }
.pane.mandanten { border-width: 0 1px 1px 0; }
.pane.user { border-width: 0 0 1px 1px; }
.pane.rollen { grid-column: 1 / -1; border-width: 1px 0 0; }
.body { display: flex; flex: 1; min-height: 0; }
.grid { flex: 1; min-width: 0; overflow: hidden; }
table { width: 100%; table-layout: fixed; border-collapse: separate; border-spacing: 0; }
th { height: 20px; padding: 1px 0 0; border-bottom: 1px solid #7f8ba3; font-weight: 400; text-align: left; background: linear-gradient(#8490a8, #8490a8) 0 3px / 1px 13px no-repeat, linear-gradient(#f0f1f4, #e8eaee 40%, #cdd2de 50%, #cdd2de); }
th:first-child { background: linear-gradient(#f0f1f4, #e8eaee 40%, #cdd2de 50%, #cdd2de); }
th:last-child { box-shadow: inset -1px 0 #7f8ba3; }
.th { display: flex; align-items: center; justify-content: space-between; padding: 0 6px 0 5px; white-space: nowrap; }
.th svg { width: 8px; height: 4px; }
td { position: relative; height: 17px; padding: 0 0 0 4px; border: 1px dotted #bcc2cc; border-width: 0 1px 1px 0; white-space: nowrap; }
td:has(input) { padding: 0; }
.current td { background: #7eb9ea; border-right-color: #d4e8f8; }
.current.focus td:first-child { background: #fff; box-shadow: inset 0 0 0 1px #7eb9ea; }
input[type="checkbox"] { appearance: none; display: block; width: 13px; height: 13px; margin: 1px auto; border: 1px solid #8791a8; background: linear-gradient(135deg, #c9cdd6, #f8f8f9) center / 7px 7px no-repeat, #f2f3f5; }
input[type="checkbox"]:checked { background: url('data:image/svg+xml,<svg xmlns="http://www.w3.org/2000/svg" viewBox="0 0 11 11"><path d="M2.500 5.500l2 3 4-7" fill="none" stroke="%23344b78" stroke-width="1.800"/></svg>') center / 11px 11px no-repeat, linear-gradient(135deg, #c9cdd6, #f8f8f9) center / 7px 7px no-repeat, #f2f3f5; }
input[type="checkbox"].partial { margin: 2px auto; background: linear-gradient(135deg, #5c6a84, #b4bccb) center / 7px 7px no-repeat, #e4e7ec; }
.row-mark { position: absolute; z-index: 1; inset: -4px -93px -3px calc(50% - 29px); border: 2px solid #f00; }
.scroll { display: grid; width: 17px; flex: none; justify-items: center; background: #f0f0f0; }
.scroll i { grid-row: 2; width: 2px; background: #868686; }
.record { display: flex; height: 17px; flex: none; border-top: 1px solid #7f8ba3; }
.record-in { display: flex; align-items: center; padding-left: 4px; background: #c5cddc; }
.record-in label { width: 59px; }
.record-in button { width: 21px; display: grid; place-items: center; color: #3d5480; }
.record-in button:disabled { color: #98a4b8; }
.record-in svg { width: 8px; height: 8px; }
.record-in input { width: 43px; height: 15px; padding: 0 1px; border: 1px solid #7f8ba3; border-radius: 0; font: inherit; text-align: right; }
.record-in span { margin-left: 3px; }
.record-in .total { margin: 0 5px 0 12px; }
</style>
